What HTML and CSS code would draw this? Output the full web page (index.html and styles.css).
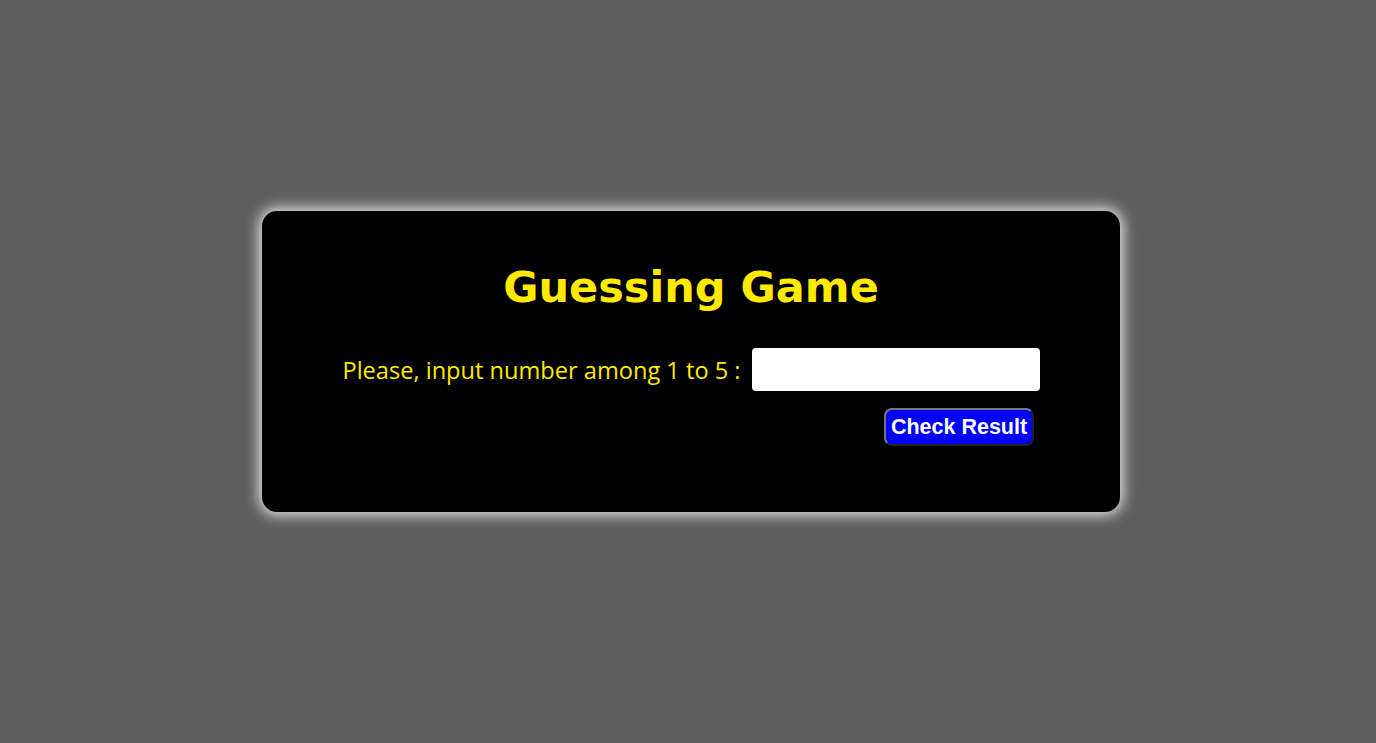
FILE: index.html
```html
<!DOCTYPE html>
<html lang="en">
<head>
<meta charset="utf-8">
<title>Guessing Game</title>
<link rel="stylesheet" href="styles.css">
</head>
<body>
<main class="page">
  <section class="card">
    <h1 class="title">Guessing Game</h1>
    <div class="field-row">
      <label class="label" for="guess">Please, input number among 1 to 5 :</label>
      <input class="input" id="guess" type="text">
    </div>
    <div class="button-row">
      <button class="check-btn" type="button">Check Result</button>
    </div>
  </section>
</main>
</body>
</html>
```

FILE: styles.css
```css
html, body {
  margin: 0;
  padding: 0;
}
body {
  background: #5e5e5e;
}
.page {
  box-sizing: border-box;
  height: 743px;
  padding: 211px 0 0 6px;
  display: flex;
  justify-content: center;
  align-items: flex-start;
}
.card {
  box-sizing: border-box;
  width: 858px;
  height: 301px;
  background: #000;
  border-radius: 15px;
  box-shadow: 0 0 14px 3px rgba(255, 255, 255, 0.85);
  padding-top: 49px;
}
.title {
  margin: 0;
  text-align: center;
  color: #ffea00;
  font-family: "DejaVu Sans", sans-serif;
  font-weight: bold;
  font-size: 43px;
  line-height: 54px;
}
.field-row {
  margin-top: 34px;
  display: flex;
  justify-content: center;
  align-items: center;
  gap: 11px;
}
.label {
  color: #ffea00;
  font-family: "Open Sans", sans-serif;
  font-size: 23.6px;
}
.input {
  box-sizing: border-box;
  width: 288px;
  height: 43px;
  border: none;
  border-radius: 4px;
  background: #fff;
  outline: none;
}
.button-row {
  margin-top: 17px;
  display: flex;
  justify-content: flex-end;
  padding-right: 86px;
}
.check-btn {
  box-sizing: border-box;
  width: 150px;
  height: 38px;
  padding: 0;
  background: #0000ff;
  color: #fff;
  border: 2px outset #767676;
  border-radius: 8px;
  font-family: "Liberation Sans", Arial, sans-serif;
  font-weight: bold;
  font-size: 21.5px;
}
```
